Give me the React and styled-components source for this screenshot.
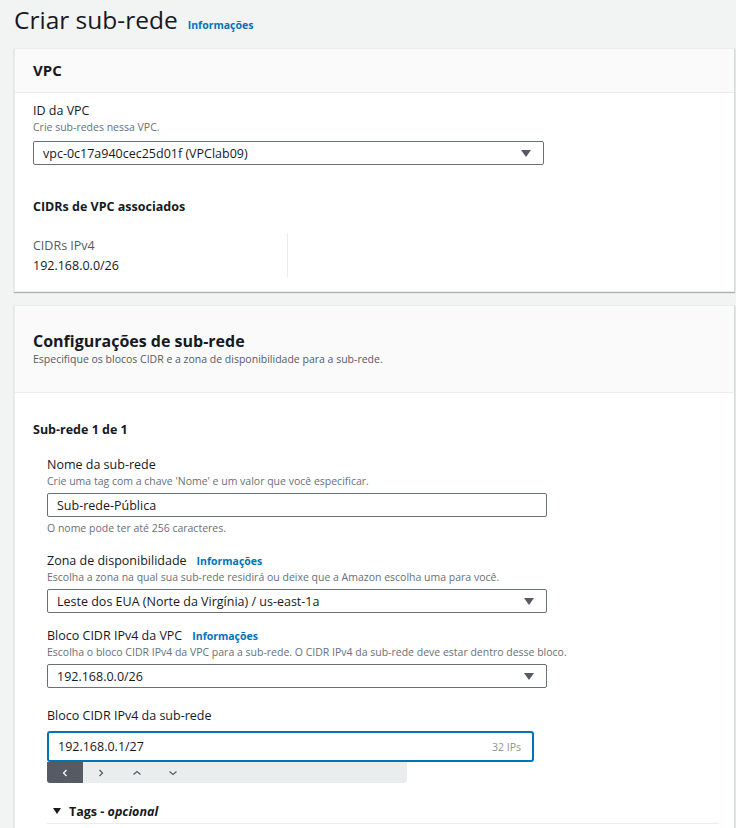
import React from "react";
import styled, { createGlobalStyle } from "styled-components";

const GlobalStyle = createGlobalStyle`
  html, body {
    margin: 0;
    padding: 0;
    background: #f2f3f3;
    font-family: "Open Sans", "Noto Sans", sans-serif;
    color: #16191f;
  }
`;

const Page = styled.div`
  width: 736px;
  height: 828px;
  overflow: hidden;
  padding: 0 1px 0 14px;
  box-sizing: border-box;
`;

const TitleRow = styled.div`
  display: flex;
  align-items: baseline;
  gap: 10px;
  height: 48px;
  padding-top: 4px;
  box-sizing: border-box;
`;

const Title = styled.h1`
  margin: 0;
  font-size: 24.5px;
  font-weight: 400;
  line-height: 32px;
  color: #16191f;
`;

const Info = styled.span`
  font-size: 10.5px;
  font-weight: 700;
  color: #0073bb;
  margin-left: ${(p) => p.$gap || 0}px;
`;

const Panel = styled.section`
  background: #fff;
  border: 1px solid #eaeded;
  border-right-color: #d5dbdb;
  box-shadow: 0 1px 1px 0 rgba(0, 28, 36, 0.3);
  margin-bottom: ${(p) => p.$mb || 0}px;
`;

const PanelHeader = styled.div`
  background: #fafafa;
  border-bottom: 1px solid #eaeded;
  padding: ${(p) => p.$pad};
  height: ${(p) => p.$h}px;
  box-sizing: border-box;
`;

const PanelTitle = styled.h2`
  margin: 0;
  font-size: ${(p) => p.$size}px;
  font-weight: 700;
  line-height: 22px;
`;

const PanelDesc = styled.div`
  font-size: 10.5px;
  color: #545b64;
  line-height: 14px;
`;

const PanelBody = styled.div`
  padding: ${(p) => p.$pad};
  height: ${(p) => p.$h}px;
  box-sizing: border-box;
`;

const Field = styled.div`
  margin-bottom: ${(p) => p.$mb || 0}px;
`;

const LabelRow = styled.div`
  display: flex;
  align-items: baseline;
  font-size: 12.5px;
  line-height: 18px;
  color: #16191f;
`;

const Hint = styled.div`
  font-size: 10.5px;
  line-height: 15px;
  color: #687078;
  margin-top: ${(p) => p.$mt || 0}px;
  margin-bottom: ${(p) => p.$mb || 0}px;
`;

const Control = styled.div`
  display: flex;
  align-items: center;
  justify-content: space-between;
  width: ${(p) => p.$w}px;
  height: ${(p) => p.$h || 24}px;
  box-sizing: border-box;
  border: ${(p) => (p.$focus ? "2px solid #0073bb" : "1px solid #687078")};
  border-radius: ${(p) => (p.$focus ? 3 : 2)}px;
  padding: 0 ${(p) => (p.$focus ? 11 : 12)}px 0 9px;
  font-size: 12.5px;
  color: #16191f;
  background: #fff;
`;

const Caret = styled.span`
  width: 0;
  height: 0;
  border-left: 5px solid transparent;
  border-right: 5px solid transparent;
  border-top: 7px solid #545b64;
`;

const Suffix = styled.span`
  font-size: 10.5px;
  color: #879596;
`;

const SubHeading = styled.div`
  font-size: 12.5px;
  font-weight: 700;
  line-height: 18px;
  margin-bottom: ${(p) => p.$mb || 0}px;
`;

const CidrRow = styled.div`
  display: flex;
`;

const CidrCol = styled.div`
  width: 254px;
  border-right: 1px solid #eaeded;
  padding-top: 3px;
  height: 41px;
  font-size: 12.5px;
  line-height: 20px;
`;

const Muted = styled.div`
  color: #545b64;
`;

const FormBlock = styled.div`
  padding-left: 14px;
`;

const Toolbar = styled.div`
  display: flex;
  width: 360px;
  height: 21px;
  background: #eaeded;
  border-radius: 0 0 3px 3px;
  margin-bottom: 16px;
`;

const ToolBtn = styled.div`
  width: ${(p) => p.$w}px;
  display: flex;
  align-items: center;
  justify-content: center;
  background: ${(p) => (p.$active ? "#545b64" : "transparent")};
  color: ${(p) => (p.$active ? "#fff" : "#545b64")};
  border-radius: ${(p) => (p.$active ? "0 0 0 3px" : "0")};
`;

const Expander = styled.div`
  display: flex;
  align-items: center;
  gap: 8px;
  width: 672px;
  height: 25px;
  border-bottom: 1px solid #eaeded;
  font-size: 12.5px;
  font-weight: 700;
  padding-left: 6px;
  box-sizing: border-box;
  em {
    font-weight: 700;
    font-style: italic;
  }
`;

const SmallCaret = styled.span`
  width: 0;
  height: 0;
  border-left: 4px solid transparent;
  border-right: 4px solid transparent;
  border-top: 6px solid #16191f;
`;

const Chev = ({ d }) => (
  <svg width="12" height="12" viewBox="0 0 12 12" fill="none" stroke="currentColor" strokeWidth="1.2">
    <path d={d} />
  </svg>
);

export default function App() {
  return (
    <Page>
      <GlobalStyle />
      <TitleRow>
        <Title>Criar sub-rede</Title>
        <Info>Informações</Info>
      </TitleRow>

      <Panel $mb={13}>
        <PanelHeader $pad="10px 18px" $h={44}>
          <PanelTitle $size={15}>VPC</PanelTitle>
        </PanelHeader>
        <PanelBody $pad="9px 18px 0" $h={198}>
          <Field $mb={33}>
            <LabelRow>ID da VPC</LabelRow>
            <Hint $mb={6}>Crie sub-redes nessa VPC.</Hint>
            <Control $w={511}>
              vpc-0c17a940cec25d01f (VPClab09)
              <Caret />
            </Control>
          </Field>
          <SubHeading $mb={17}>CIDRs de VPC associados</SubHeading>
          <CidrRow>
            <CidrCol>
              <Muted>CIDRs IPv4</Muted>
              <div>192.168.0.0/26</div>
            </CidrCol>
          </CidrRow>
        </PanelBody>
      </Panel>

      <Panel>
        <PanelHeader $pad="24px 18px 0" $h={87}>
          <PanelTitle $size={16}>Configurações de sub-rede</PanelTitle>
          <PanelDesc>Especifique os blocos CIDR e a zona de disponibilidade para a sub-rede.</PanelDesc>
        </PanelHeader>
        <PanelBody $pad="28px 18px 0" $h={460}>
          <SubHeading $mb={17}>Sub-rede 1 de 1</SubHeading>
          <FormBlock>
            <Field $mb={16}>
              <LabelRow>Nome da sub-rede</LabelRow>
              <Hint $mb={4}>Crie uma tag com a chave 'Nome' e um valor que você especificar.</Hint>
              <Control $w={500}>Sub-rede-Pública</Control>
              <Hint $mt={4}>O nome pode ter até 256 caracteres.</Hint>
            </Field>
            <Field $mb={14}>
              <LabelRow>
                Zona de disponibilidade<Info $gap={10}>Informações</Info>
              </LabelRow>
              <Hint $mb={4}>Escolha a zona na qual sua sub-rede residirá ou deixe que a Amazon escolha uma para você.</Hint>
              <Control $w={500}>
                Leste dos EUA (Norte da Virgínia) / us-east-1a
                <Caret />
              </Control>
            </Field>
            <Field $mb={19}>
              <LabelRow>
                Bloco CIDR IPv4 da VPC<Info $gap={10}>Informações</Info>
              </LabelRow>
              <Hint $mb={4}>Escolha o bloco CIDR IPv4 da VPC para a sub-rede. O CIDR IPv4 da sub-rede deve estar dentro desse bloco.</Hint>
              <Control $w={500}>
                192.168.0.0/26
                <Caret />
              </Control>
            </Field>
            <Field>
              <LabelRow>Bloco CIDR IPv4 da sub-rede</LabelRow>
              <div style={{ height: 6 }} />
              <Control $w={487} $h={31} $focus>
                192.168.0.1/27
                <Suffix>32 IPs</Suffix>
              </Control>
              <Toolbar>
                <ToolBtn $w={36} $active><Chev d="M7.5 3 L4.5 6 L7.5 9" /></ToolBtn>
                <ToolBtn $w={36}><Chev d="M4.5 3 L7.5 6 L4.5 9" /></ToolBtn>
                <ToolBtn $w={36}><Chev d="M2.5 7.5 L6 4.5 L9.5 7.5" /></ToolBtn>
                <ToolBtn $w={36}><Chev d="M2.5 4.5 L6 7.5 L9.5 4.5" /></ToolBtn>
              </Toolbar>
              <Expander>
                <SmallCaret />
                <span>Tags - <em>opcional</em></span>
              </Expander>
            </Field>
          </FormBlock>
        </PanelBody>
      </Panel>
    </Page>
  );
}
